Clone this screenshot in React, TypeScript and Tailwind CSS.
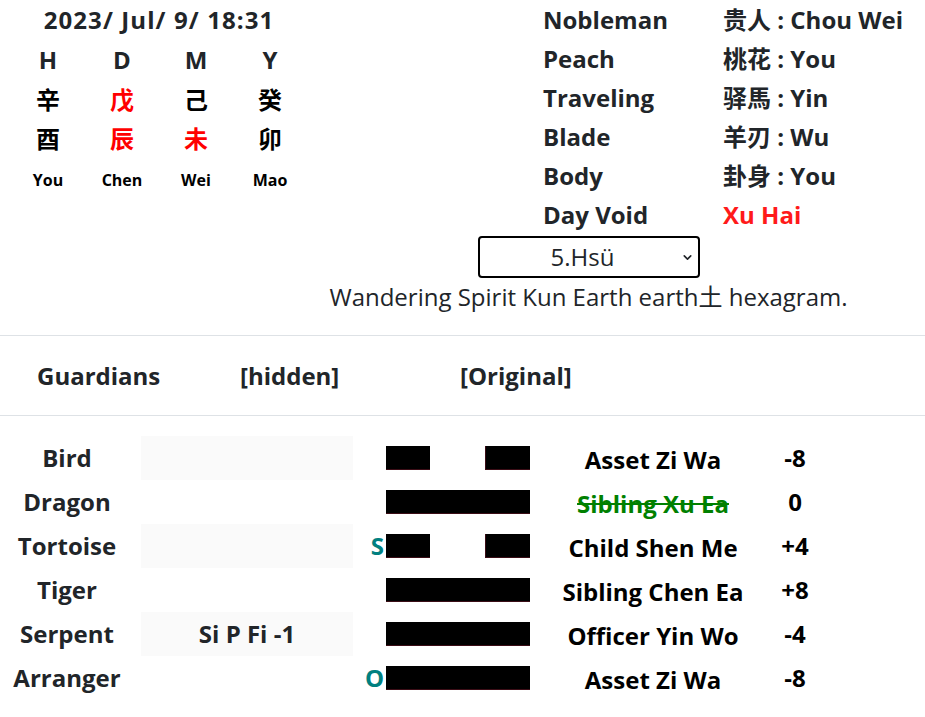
import { ChevronDown } from 'lucide-react';

const FONT = "font-['Open_Sans','Noto_Sans_CJK_SC',sans-serif]";

const pillars = [
  { head: 'H', stem: '辛', stemRed: false, branch: '酉', branchRed: false, name: 'You' },
  { head: 'D', stem: '戊', stemRed: true, branch: '辰', branchRed: true, name: 'Chen' },
  { head: 'M', stem: '己', stemRed: false, branch: '未', branchRed: true, name: 'Wei' },
  { head: 'Y', stem: '癸', stemRed: false, branch: '卯', branchRed: false, name: 'Mao' },
];

const stars = [
  { label: 'Nobleman', value: '贵人 : Chou Wei', red: false },
  { label: 'Peach', value: '桃花 : You', red: false },
  { label: 'Traveling', value: '驿馬 : Yin', red: false },
  { label: 'Blade', value: '羊刃 : Wu', red: false },
  { label: 'Body', value: '卦身 : You', red: false },
  { label: 'Day Void', value: 'Xu Hai', red: true },
];

const lines = [
  { guardian: 'Bird', hidden: '', mark: '', yang: false, name: 'Asset Zi Wa', score: '-8', struck: false },
  { guardian: 'Dragon', hidden: '', mark: '', yang: true, name: 'Sibling Xu Ea', score: '0', struck: true },
  { guardian: 'Tortoise', hidden: '', mark: 'S', yang: false, name: 'Child Shen Me', score: '+4', struck: false },
  { guardian: 'Tiger', hidden: '', mark: '', yang: true, name: 'Sibling Chen Ea', score: '+8', struck: false },
  { guardian: 'Serpent', hidden: 'Si P Fi -1', mark: '', yang: true, name: 'Officer Yin Wo', score: '-4', struck: false },
  { guardian: 'Arranger', hidden: '', mark: 'O', yang: true, name: 'Asset Zi Wa', score: '-8', struck: false },
];

function Bar({ yang }: { yang: boolean }) {
  if (yang) {
    return <div className="w-[144px] h-[24px] bg-black border-b border-[#3b0d16]" />;
  }
  return (
    <div className="w-[144px] h-[24px] flex justify-between">
      <div className="w-[44px] h-full bg-black border-b border-[#3b0d16]" />
      <div className="w-[45px] h-full bg-black border-b border-l border-[#3b0d16]" />
    </div>
  );
}

export default function App() {
  return (
    <div className={`w-[925px] h-[717px] overflow-hidden bg-white text-[#212529] ${FONT}`}>
      <div className="flex">
        <div className="w-[462px]">
          <div className="ml-[11px] w-[296px] h-[40px] leading-[40px] text-center text-[24px] font-bold tracking-[1.1px]">
            2023/ Jul/ 9/ 18:31
          </div>
          <div className="ml-[11px] grid grid-cols-4 w-[296px] text-center">
            {pillars.map((p) => (
              <div key={p.head} className="flex flex-col">
                <div className="h-[40px] leading-[40px] text-[24px] font-bold">{p.head}</div>
                <div className={`h-[39px] leading-[39px] text-[24px] font-bold ${p.stemRed ? 'text-[#ff0000]' : 'text-black'}`}>{p.stem}</div>
                <div className={`h-[39px] leading-[39px] text-[24px] font-bold ${p.branchRed ? 'text-[#ff0000]' : 'text-black'}`}>{p.branch}</div>
                <div className="h-[44px] leading-[44px] text-[16px] font-bold text-black">{p.name}</div>
              </div>
            ))}
          </div>
        </div>
        <div className="pl-[81px] grid grid-cols-[180px_auto]">
          {stars.map((s) => (
            <div key={s.label} className="contents">
              <div className="h-[39px] leading-[39px] text-[24px] font-bold whitespace-nowrap">{s.label}</div>
              <div className={`h-[39px] leading-[39px] text-[24px] font-bold whitespace-nowrap ${s.red ? 'text-[#ff1a1a]' : ''}`}>{s.value}</div>
            </div>
          ))}
        </div>
      </div>

      <div className="ml-[252px] mt-[2px] flex flex-col items-center">
        <div className="relative w-[222px] h-[42px] border-2 border-black rounded-[4px] flex items-center">
          <span className="flex-1 text-center pr-[12px] text-[24px] leading-none">5.Hsü</span>
          <ChevronDown className="absolute right-[4px] top-[13px] w-[13px] h-[13px]" strokeWidth={3} />
        </div>
        <p className="h-[38px] leading-[38px] text-[24px] whitespace-nowrap">Wandering Spirit Kun Earth earth土 hexagram.</p>
      </div>

      <div className="mt-[19px] border-t border-[#dee2e6]" />
      <div className="h-[79px] flex items-center pl-[37px] text-[24px] font-bold">
        <div className="w-[203px]">Guardians</div>
        <div className="w-[220px]">[hidden]</div>
        <div>[Original]</div>
      </div>
      <div className="border-t border-[#dee2e6]" />

      <div className="pt-[20px]">
        {lines.map((l, i) => (
          <div key={i} className="h-[44px] flex items-center text-[24px] font-bold">
            <div className="w-[134px] text-center">{l.guardian}</div>
            <div className={`ml-[7px] w-[212px] h-full flex items-center justify-center ${i % 2 === 0 ? 'bg-[#fafafa]' : ''}`}>
              {l.hidden}
            </div>
            <div className="w-[33px] pr-[2px] text-right text-[#008080]">{l.mark}</div>
            <Bar yang={l.yang} />
            <div className={`w-[246px] pt-[4px] text-center whitespace-nowrap ${l.struck ? 'text-[#008000] line-through' : 'text-black'}`}>
              {l.name}
            </div>
            <div className="w-[38px] text-center text-black">{l.score}</div>
          </div>
        ))}
      </div>
    </div>
  );
}
